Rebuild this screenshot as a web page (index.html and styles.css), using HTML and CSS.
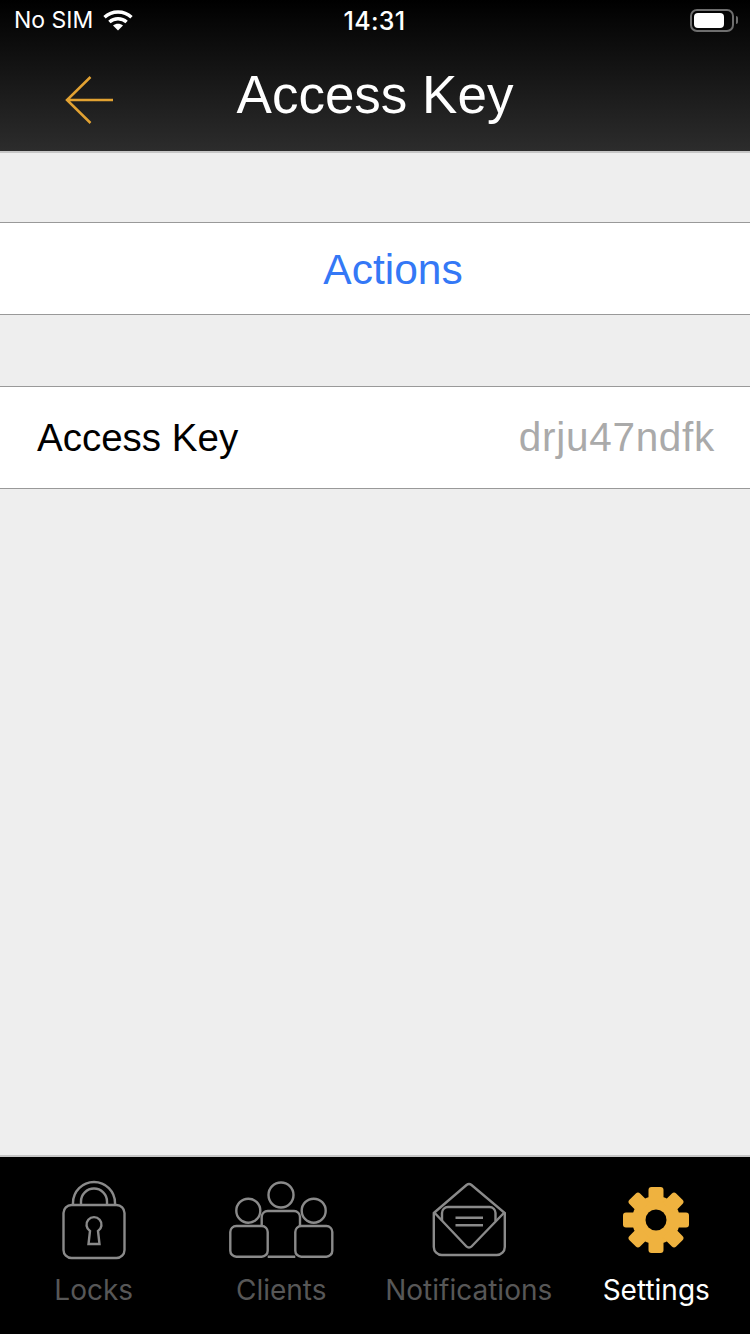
FILE: index.html
```html
<!DOCTYPE html>
<html lang="en">
<head>
    <meta charset="UTF-8">
    <meta name="viewport" content="width=device-width, initial-scale=1.0">
    <title>Access Key</title>
    <link rel="stylesheet" href="styles.css">
</head>
<body>
    <div class="top">
        <div class="status">
            <div class="status-left">
                <span>No SIM</span>
                <svg class="wifi" width="30" height="22" viewBox="0 0 30 22">
                    <path d="M1.5 8.2C9 1.2 21 1.2 28.5 8.2" fill="none" stroke="#fff" stroke-width="3.4"/>
                    <path d="M6.4 13C11.2 8.6 18.8 8.6 23.6 13" fill="none" stroke="#fff" stroke-width="3.4"/>
                    <path d="M10 16.6C12.8 14.2 17.2 14.2 20 16.6L15 21.6Z" fill="#fff"/>
                </svg>
            </div>
            <div class="status-time">14:31</div>
            <div class="status-right">
                <div class="battery"><div class="battery-fill"></div></div>
                <div class="battery-nub"></div>
            </div>
        </div>
        <header class="nav">
            <svg class="back" width="50" height="50" viewBox="0 0 50 50">
                <path d="M2 25H48M25.500 2L2 25L25.500 48" fill="none" stroke="#e2a232" stroke-width="2.500"/>
            </svg>
            <h1 class="nav-title">Access Key</h1>
        </header>
    </div>

    <main class="content">
        <div class="row row-action">Actions</div>
        <div class="row row-key">
            <span class="key-label">Access Key</span>
            <span class="key-value">drju47ndfk</span>
        </div>
    </main>

    <nav class="tabs">
        <div class="tab">
            <svg class="tab-icon" viewBox="0 0 120 84">
                <rect x="29.500" y="29" width="61" height="53" rx="8"/>
                <path d="M39 29V27a21 21 0 0 1 42 0V29"/>
                <path d="M47 29V25.500a13 13 0 0 1 26 0V29"/>
                <path d="M54.500 68H65.500L64 55a7.500 7.500 0 1 0-8 0Z"/>
            </svg>
            <span class="tab-label">Locks</span>
        </div>
        <div class="tab">
            <svg class="tab-icon" viewBox="0 0 120 84">
                <circle cx="60" cy="19" r="12.500"/>
                <circle cx="27.300" cy="34.700" r="12"/>
                <circle cx="92.700" cy="34.700" r="12"/>
                <rect x="9.300" y="50" width="37.400" height="30.700" rx="6"/>
                <rect x="74.300" y="50" width="37" height="30.700" rx="6"/>
                <path d="M40.700 50V41a6 6 0 0 1 6-6H73a6 6 0 0 1 6 6V50M46.700 80.700H74.300"/>
            </svg>
            <span class="tab-label">Clients</span>
        </div>
        <div class="tab">
            <svg class="tab-icon" viewBox="0 0 120 84">
                <path d="M24.800 37L57.500 9a4 4 0 0 1 5 0L95.800 37V71a8 8 0 0 1-8 8H32.800a8 8 0 0 1-8-8Z"/>
                <path d="M24.800 36L57.500 70.500a3.500 3.500 0 0 0 5 0L95.800 36"/>
                <path d="M33 45V37a6 6 0 0 1 6-6H80.500a6 6 0 0 1 6 6V45"/>
                <path d="M46.500 41.700H74M46.500 49.300H74"/>
            </svg>
            <span class="tab-label">Notifications</span>
        </div>
        <div class="tab tab-active">
            <svg class="tab-icon" viewBox="0 0 120 84">
                <g fill="#efb23f">
                    <circle cx="60" cy="44" r="24"/>
                    <rect x="52.500" y="11" width="15" height="16" rx="3"/>
                    <rect x="52.500" y="11" width="15" height="16" rx="3" transform="rotate(45 60 44)"/>
                    <rect x="52.500" y="11" width="15" height="16" rx="3" transform="rotate(90 60 44)"/>
                    <rect x="52.500" y="11" width="15" height="16" rx="3" transform="rotate(135 60 44)"/>
                    <rect x="52.500" y="11" width="15" height="16" rx="3" transform="rotate(180 60 44)"/>
                    <rect x="52.500" y="11" width="15" height="16" rx="3" transform="rotate(225 60 44)"/>
                    <rect x="52.500" y="11" width="15" height="16" rx="3" transform="rotate(270 60 44)"/>
                    <rect x="52.500" y="11" width="15" height="16" rx="3" transform="rotate(315 60 44)"/>
                </g>
                <circle cx="60" cy="44" r="10.500" fill="#000"/>
            </svg>
            <span class="tab-label">Settings</span>
        </div>
    </nav>
</body>
</html>
```

FILE: styles.css
```css
* {
    box-sizing: border-box;
}

body {
    margin: 0;
    width: 750px;
    height: 1334px;
    overflow: hidden;
    display: flex;
    flex-direction: column;
    background-color: #eeeeee;
    font-family: 'Liberation Sans', Arial, sans-serif;
}

.top {
    height: 153px;
    flex-shrink: 0;
    background: linear-gradient(180deg, #000000, #2c2c2c);
    border-bottom: 2px solid #c6c6c6;
}

.status {
    height: 40px;
    display: grid;
    grid-template-columns: 1fr auto 1fr;
    align-items: center;
    padding: 0 12px 0 14px;
    color: white;
    font-family: 'Inter', sans-serif;
    font-size: 23px;
}

.status-left {
    display: flex;
    align-items: center;
    gap: 10px;
}

.status-time {
    font-size: 25px;
    font-weight: 500;
    letter-spacing: 0.300px;
    padding: 1px 3px 0 0;
}

.status-right {
    display: flex;
    align-items: center;
    justify-content: flex-end;
    gap: 2px;
}

.battery {
    width: 44px;
    height: 23px;
    padding: 2px;
    border: 2px solid #6e6e6e;
    border-radius: 7px;
}

.battery-fill {
    width: 30px;
    height: 100%;
    background-color: white;
    border-radius: 4px;
}

.battery-nub {
    width: 2px;
    height: 8px;
    background-color: #6e6e6e;
    border-radius: 0 2px 2px 0;
}

.nav {
    height: 111px;
    display: flex;
    align-items: center;
    justify-content: center;
    position: relative;
    padding-bottom: 2px;
}

.back {
    position: absolute;
    left: 65px;
    top: 35px;
}

.nav-title {
    margin: 0;
    color: white;
    font-size: 53px;
    font-weight: normal;
}

.content {
    flex: 1;
    padding-top: 69px;
}

.row {
    background-color: white;
    border-top: 1px solid #999;
    border-bottom: 1px solid #999;
}

.row-action {
    height: 93px;
    display: flex;
    align-items: center;
    justify-content: center;
    padding: 2px 0 0 36px;
    color: #3478f6;
    font-size: 42.500px;
}

.row-key {
    height: 103px;
    margin-top: 71px;
    display: flex;
    align-items: center;
    justify-content: space-between;
    padding: 0 35px 0 37px;
    font-size: 38.500px;
}

.key-label {
    color: black;
}

.key-value {
    color: #aaaaaa;
    font-size: 40.500px;
    letter-spacing: 0.700px;
}

.tabs {
    height: 179px;
    flex-shrink: 0;
    display: grid;
    grid-template-columns: repeat(4, 1fr);
    background-color: black;
    border-top: 2px solid #c6c6c6;
    padding-top: 19px;
}

.tab {
    display: flex;
    flex-direction: column;
    align-items: center;
    color: #575757;
    font-family: 'Inter', sans-serif;
    font-size: 28px;
}

.tab-icon {
    width: 120px;
    height: 84px;
    fill: none;
    stroke: #8a8a8a;
    stroke-width: 2.400;
}

.tab-active {
    color: white;
}

.tab-active .tab-icon {
    stroke: none;
}

.tab-label {
    margin-top: 13px;
}
```
